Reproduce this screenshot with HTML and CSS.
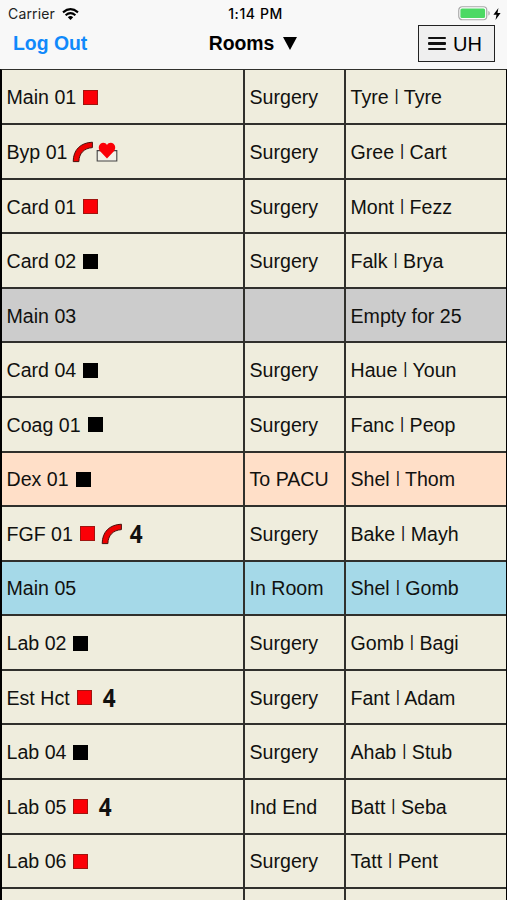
FILE: index.html
```html
<!DOCTYPE html>
<html lang="en">

<head>
  <meta charset="UTF-8">
  <meta name="viewport" content="width=device-width, initial-scale=1.0">
  <title>Rooms</title>
  <link rel="stylesheet" href="styles.css">
</head>

<body>
  <!-- shared icons -->
  <svg class="defs" width="0" height="0">
    <symbol id="tube" viewBox="0 0 22 22">
      <path d="M1.2 20.6C1.2 9 8.5 1.6 20.4 1.2V6.6C12 7.2 6.9 12.5 6.9 20.6Z" fill="#ee0000" stroke="#4a0f0c" stroke-width="1" />
    </symbol>
    <symbol id="heart" viewBox="0 0 22 22">
      <path d="M1.2 9.6H20.8V20H1.2Z" fill="#f3f1e8" stroke="#444" stroke-width="1.1" />
      <path d="M11 17.6L3.9 10C2.1 7.6 2.5 4.4 4.5 2.8C6.6 1.2 9.8 1.7 11 4.1C12.2 1.7 15.4 1.2 17.5 2.8C19.5 4.4 19.9 7.6 18.1 10Z" fill="#fb0007" />
    </symbol>
  </svg>

  <header>
    <div class="status">
      <div class="carrier">
        <span>Carrier</span>
        <svg class="wifi" viewBox="0 0 17 12">
          <path d="M1 4.4Q8.5-2 16 4.4M3.6 7.2Q8.5 3 13.4 7.2" fill="none" stroke="#000" stroke-width="2.1" />
          <path d="M5.8 9.2Q8.5 7 11.2 9.2L8.5 12Z" />
        </svg>
      </div>
      <div class="time">1:14 PM</div>
      <div class="power">
        <svg class="battery" viewBox="0 0 33 15">
          <rect x="0.75" y="0.75" width="28" height="13" rx="3.4" fill="#fff" stroke="#a9a9a9" stroke-width="1.2" />
          <rect x="2.4" y="2.4" width="24.7" height="9.7" rx="1.6" fill="#4cd964" />
          <path d="M30.4 5C32.2 5.6 32.2 9 30.4 9.6Z" fill="#a9a9a9" />
        </svg>
        <svg class="bolt" viewBox="0 0 8 12">
          <path d="M5.4 0L0.4 6.8H3.5L2.5 12L7.6 4.9H4.5Z" />
        </svg>
      </div>
    </div>
    <div class="nav">
      <a class="logout">Log Out</a>
      <div class="title">Rooms
        <svg class="arrow" viewBox="0 0 14 13"><path d="M0 0H14L7 13Z" /></svg>
      </div>
      <div class="menu">
        <div class="bars"><i></i><i></i><i></i></div>
        <span>UH</span>
      </div>
    </div>
  </header>

  <div class="rooms">
    <div class="row">
      <div>Main 01<i class="box red"></i></div>
      <div>Surgery</div>
      <div>Tyre <s>|</s> Tyre</div>
    </div>
    <div class="row">
      <div>Byp 01<svg class="icon tube"><use href="#tube" /></svg><svg class="icon heart"><use href="#heart" /></svg></div>
      <div>Surgery</div>
      <div>Gree <s>|</s> Cart</div>
    </div>
    <div class="row">
      <div>Card 01<i class="box red"></i></div>
      <div>Surgery</div>
      <div>Mont <s>|</s> Fezz</div>
    </div>
    <div class="row">
      <div>Card 02<i class="box"></i></div>
      <div>Surgery</div>
      <div>Falk <s>|</s> Brya</div>
    </div>
    <div class="row empty">
      <div>Main 03</div>
      <div></div>
      <div>Empty for 25</div>
    </div>
    <div class="row">
      <div>Card 04<i class="box"></i></div>
      <div>Surgery</div>
      <div>Haue <s>|</s> Youn</div>
    </div>
    <div class="row">
      <div>Coag 01<i class="box"></i></div>
      <div>Surgery</div>
      <div>Fanc <s>|</s> Peop</div>
    </div>
    <div class="row pacu">
      <div>Dex 01<i class="box"></i></div>
      <div>To PACU</div>
      <div>Shel <s>|</s> Thom</div>
    </div>
    <div class="row">
      <div>FGF 01<i class="box red"></i><svg class="icon tube"><use href="#tube" /></svg><b>4</b></div>
      <div>Surgery</div>
      <div>Bake <s>|</s> Mayh</div>
    </div>
    <div class="row inroom">
      <div>Main 05</div>
      <div>In Room</div>
      <div>Shel <s>|</s> Gomb</div>
    </div>
    <div class="row">
      <div>Lab 02<i class="box"></i></div>
      <div>Surgery</div>
      <div>Gomb <s>|</s> Bagi</div>
    </div>
    <div class="row">
      <div>Est Hct<i class="box red"></i><b>4</b></div>
      <div>Surgery</div>
      <div>Fant <s>|</s> Adam</div>
    </div>
    <div class="row">
      <div>Lab 04<i class="box"></i></div>
      <div>Surgery</div>
      <div>Ahab <s>|</s> Stub</div>
    </div>
    <div class="row">
      <div>Lab 05<i class="box red"></i><b>4</b></div>
      <div>Ind End</div>
      <div>Batt <s>|</s> Seba</div>
    </div>
    <div class="row">
      <div>Lab 06<i class="box red"></i></div>
      <div>Surgery</div>
      <div>Tatt <s>|</s> Pent</div>
    </div>
    <div class="row">
      <div></div>
      <div></div>
      <div></div>
    </div>
  </div>
</body>

</html>
```
FILE: styles.css
```css
* {
  padding: 0;
  margin: 0;
  box-sizing: border-box;
}

body {
  height: 900px;
  overflow: hidden;
  background-color: #f8f8f8;
  color: #11110f;
  font-family: "Liberation Sans", Arial, sans-serif;
}

svg {
  display: block;
}

.defs {
  display: none;
}

/* top bar */
header {
  height: 69px;
  color: #000;
}

.status {
  height: 25px;
  padding: 2px 6px 0 8px;
  display: grid;
  grid-template-columns: 1fr auto 1fr;
  align-items: center;
  font-family: Inter, "Liberation Sans", sans-serif;
  font-size: 14px;
}

.carrier {
  display: flex;
  align-items: center;
  gap: 7px;
  color: #222;
}

.carrier span {
  letter-spacing: 0.15px;
}

.wifi {
  width: 17px;
  height: 12px;
}

.time {
  padding-left: 2px;
  font-weight: 500;
  font-size: 14px;
  letter-spacing: 0.6px;
}

.power {
  display: flex;
  justify-content: flex-end;
  align-items: center;
  gap: 2px;
}

.battery {
  width: 33px;
  height: 15px;
}

.bolt {
  width: 8px;
  height: 12px;
}

.nav {
  height: 37px;
  padding: 0 12px 0 13px;
  display: grid;
  grid-template-columns: 1fr auto 1fr;
  align-items: center;
}

.logout {
  color: #1089fb;
  font-size: 19.4px;
  font-weight: bold;
}

.title {
  padding-right: 2px;
  display: flex;
  align-items: center;
  gap: 9px;
  font-size: 19.4px;
  font-weight: bold;
}

.arrow {
  width: 14px;
  height: 13px;
}

.menu {
  justify-self: end;
  width: 77px;
  height: 37px;
  display: flex;
  align-items: center;
  padding-left: 9px;
  gap: 7px;
  border: 1px solid #222;
  background-color: #efefef;
  font-size: 20px;
}

.menu span {
  padding-top: 1px;
}

.bars {
  display: flex;
  flex-direction: column;
  gap: 3px;
}

.bars i {
  width: 18px;
  height: 2.5px;
  border-radius: 1px;
  background-color: #111;
}

/* room list */
.rooms {
  border-top: 1px solid #30302c;
  border-left: 2px solid #000;
  border-right: 1px solid #000;
}

.row {
  height: 54.57px;
  display: grid;
  grid-template-columns: 243px 101px 1fr;
  border-bottom: 2px solid #30302c;
  background-color: #efeddd;
  font-size: 19.6px;
}

.row:first-child {
  height: 55.2px;
}

.row>div {
  display: flex;
  align-items: center;
  padding-left: 4.5px;
  padding-top: 2px;
  border-right: 2px solid #30302c;
  white-space: pre;
}

.row>div:last-child {
  border-right: none;
}

.row.empty {
  background-color: #cccccc;
}

.row.pacu {
  background-color: #ffdfc8;
}

.row.inroom {
  background-color: #a5d9e8;
}

.row s {
  margin: 0 0 3px 0.5px;
  font-size: 16px;
  text-decoration: none;
}

.box {
  width: 15px;
  height: 15px;
  margin-left: 7px;
  margin-bottom: 1px;
  background-color: #000;
}

.box.red {
  background-color: #fb0007;
  border: 1px solid #a01510;
}

.icon {
  width: 22px;
  height: 22px;
}

.tube {
  margin-left: 4px;
}

.box+.tube {
  margin-left: 6px;
}

.heart {
  margin-left: 2px;
}

.row b {
  margin-left: 10px;
  margin-bottom: 2px;
  font-family: "Open Sans", "Noto Sans", sans-serif;
  font-size: 25px;
  line-height: 24px;
  transform: scaleX(0.9);
}

.tube+b {
  margin-left: 6px;
}
```
